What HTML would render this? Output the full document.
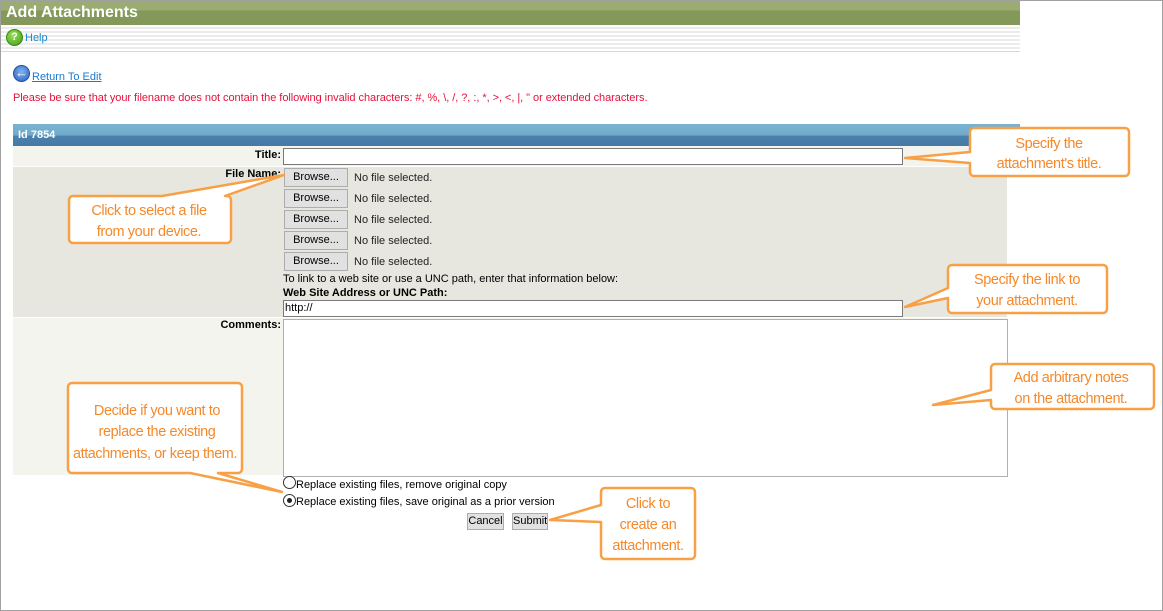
<!DOCTYPE html>
<html><head><style>
*{margin:0;padding:0;box-sizing:border-box}
body{width:1163px;height:611px;position:relative;background:#fff;font-family:"Liberation Sans",Arial,sans-serif;overflow:hidden}
.a{position:absolute}
.frame{left:0;top:0;width:1163px;height:611px;border:1px solid #a0a0a0}
.hdr{left:1px;top:1px;width:1019px;height:24px;background:linear-gradient(#9aac72 0,#9aac72 9px,#84985a 10px,#84985a 100%);color:#fff;font-weight:bold;font-size:16px;padding:3px 0 0 5px}
.help{left:1px;top:25px;width:1019px;height:27px;background:repeating-linear-gradient(#fff 0,#fff 2px,#ececec 2px,#ececec 4px);border-bottom:1px solid #d8d8d8}
.lbl{font-size:11px;font-weight:bold;text-align:right;color:#000}
.btn{left:284px;width:64px;height:19px;background:#e1e1e1;border:1px solid #adadad;font-size:11px;text-align:center;line-height:17px}
.nf{left:354px;font-size:11px;color:#222}
.co{font-family:"Liberation Sans",sans-serif;font-size:14.5px;fill:#f5892a;letter-spacing:-0.4px}
</style></head><body>
<div class="a frame"></div>
<div class="a hdr">Add Attachments</div>
<div class="a help">
 <div class="a" style="left:5px;top:4px;width:17px;height:17px;border-radius:50%;background:radial-gradient(circle at 40% 35%,#9be05a,#3d9a14);border:1px solid #3a8a10;color:#fff;font-size:11px;font-weight:bold;text-align:center;line-height:15px">?</div>
 <div class="a" style="left:24px;top:7px;font-size:11px;color:#1a8ad0">Help</div>
</div>
<div class="a" style="left:13px;top:65px;width:17px;height:17px;border-radius:50%;background:radial-gradient(circle at 50% 40%,#7fb4f0,#2a5fc0);border:1px solid #2050a0;color:#fff;font-size:13px;line-height:14px;text-align:center;font-weight:bold">&#8592;</div>
<div class="a" style="left:32px;top:71px;font-size:11px;color:#1a7ad0;text-decoration:underline">Return To Edit</div>
<div class="a" style="left:13px;top:92px;font-size:11px;color:#e8103a;letter-spacing:-0.05px">Please be sure that your filename does not contain the following invalid characters: #, %, \, /, ?, :, *, &gt;, &lt;, |, " or extended characters.</div>

<div class="a" style="left:13px;top:124px;width:1007px;height:22px;background:linear-gradient(#7ab3d2 0,#72aacb 50%,#4a82ad 55%,#4778a6 100%);color:#fff;font-weight:bold;font-size:11px;padding:5px 0 0 5px">Id 7854</div>
<div class="a" style="left:13px;top:146px;width:994px;height:20px;background:#f4f4ee"></div>
<div class="a" style="left:13px;top:167px;width:994px;height:150px;background:#e8e7df"></div>
<div class="a" style="left:13px;top:318px;width:994px;height:157px;background:#f4f4ee"></div>
<div class="a lbl" style="left:13px;top:149px;width:268px">Title:</div>
<div class="a" style="left:283px;top:148px;width:620px;height:17px;background:#fff;border:1px solid #7a7a7a"></div>
<div class="a lbl" style="left:13px;top:168px;width:268px">File Name:</div>
<div class="a btn" style="top:168px">Browse...</div><div class="a nf" style="top:172px">No file selected.</div>
<div class="a btn" style="top:189px">Browse...</div><div class="a nf" style="top:193px">No file selected.</div>
<div class="a btn" style="top:210px">Browse...</div><div class="a nf" style="top:214px">No file selected.</div>
<div class="a btn" style="top:231px">Browse...</div><div class="a nf" style="top:235px">No file selected.</div>
<div class="a btn" style="top:252px">Browse...</div><div class="a nf" style="top:256px">No file selected.</div>
<div class="a" style="left:283px;top:273px;font-size:11px">To link to a web site or use a UNC path, enter that information below:</div>
<div class="a" style="left:283px;top:287px;font-size:11px;font-weight:bold">Web Site Address or UNC Path:</div>
<div class="a" style="left:283px;top:300px;width:620px;height:17px;background:#fff;border:1px solid #7a7a7a;font-size:11px;padding:1px 1px">http://</div>
<div class="a lbl" style="left:13px;top:319px;width:268px">Comments:</div>
<div class="a" style="left:283px;top:319px;width:725px;height:158px;background:#fff;border:1px solid #b0b0b0"></div>
<div class="a" style="left:283px;top:476px;width:13px;height:13px;border-radius:50%;border:1px solid #333;background:#fff"></div>
<div class="a" style="left:296px;top:479px;font-size:11px">Replace existing files, remove original copy</div>
<div class="a" style="left:283px;top:494px;width:13px;height:13px;border-radius:50%;border:1px solid #333;background:#fff"><div class="a" style="left:3px;top:3px;width:5px;height:5px;border-radius:50%;background:#222"></div></div>
<div class="a" style="left:296px;top:496px;font-size:11px">Replace existing files, save original as a prior version</div>
<div class="a" style="left:467px;top:513px;width:37px;height:17px;background:#e1e1e1;border:1px solid #adadad;font-size:11px;text-align:center;line-height:15px">Cancel</div>
<div class="a" style="left:512px;top:513px;width:36px;height:17px;background:#e1e1e1;border:1px solid #adadad;font-size:11px;text-align:center;line-height:15px">Submit</div>

<svg class="a" style="left:0;top:0" width="1163" height="611">
<g fill="#fff" stroke="#f7a045" stroke-width="2.5" stroke-linejoin="round">
<path d="M974,128 H1125 a4,4 0 0 1 4,4 V172 a4,4 0 0 1 -4,4 H974 a4,4 0 0 1 -4,-4 V163 L905,158 L970,152 V132 a4,4 0 0 1 4,-4Z"/>
<path d="M73,196 H162 L284,175 L225,196 H227 a4,4 0 0 1 4,4 V239 a4,4 0 0 1 -4,4 H73 a4,4 0 0 1 -4,-4 V200 a4,4 0 0 1 4,-4Z"/>
<path d="M952,265 H1103 a4,4 0 0 1 4,4 V309 a4,4 0 0 1 -4,4 H952 a4,4 0 0 1 -4,-4 V298 L905,307 L948,288 V269 a4,4 0 0 1 4,-4Z"/>
<path d="M995,364 H1150 a4,4 0 0 1 4,4 V405 a4,4 0 0 1 -4,4 H995 a4,4 0 0 1 -4,-4 V400 L933,405 L991,390 V368 a4,4 0 0 1 4,-4Z"/>
<path d="M72,383 H238 a4,4 0 0 1 4,4 V469 a4,4 0 0 1 -4,4 H218 L282,492 L190,473 H72 a4,4 0 0 1 -4,-4 V387 a4,4 0 0 1 4,-4Z"/>
<path d="M605,488 H691 a4,4 0 0 1 4,4 V555 a4,4 0 0 1 -4,4 H605 a4,4 0 0 1 -4,-4 V522 L550,520 L601,505 V492 a4,4 0 0 1 4,-4Z"/>
</g>
<g class="co" text-anchor="middle">
<text x="1049" y="148">Specify the</text><text x="1049" y="168">attachment's title.</text>
<text x="149" y="215">Click to select a file</text><text x="149" y="236">from your device.</text>
<text x="1027" y="284">Specify the link to</text><text x="1027" y="305">your attachment.</text>
<text x="1071" y="382">Add arbitrary notes</text><text x="1071" y="403">on the attachment.</text>
<text x="157" y="415">Decide if you want to</text><text x="157" y="436">replace the existing</text><text x="155" y="458" textLength="164" lengthAdjust="spacingAndGlyphs">attachments, or keep them.</text>
<text x="648" y="508">Click to</text><text x="648" y="529">create an</text><text x="648" y="550">attachment.</text>
</g>
</svg>
</body></html>
